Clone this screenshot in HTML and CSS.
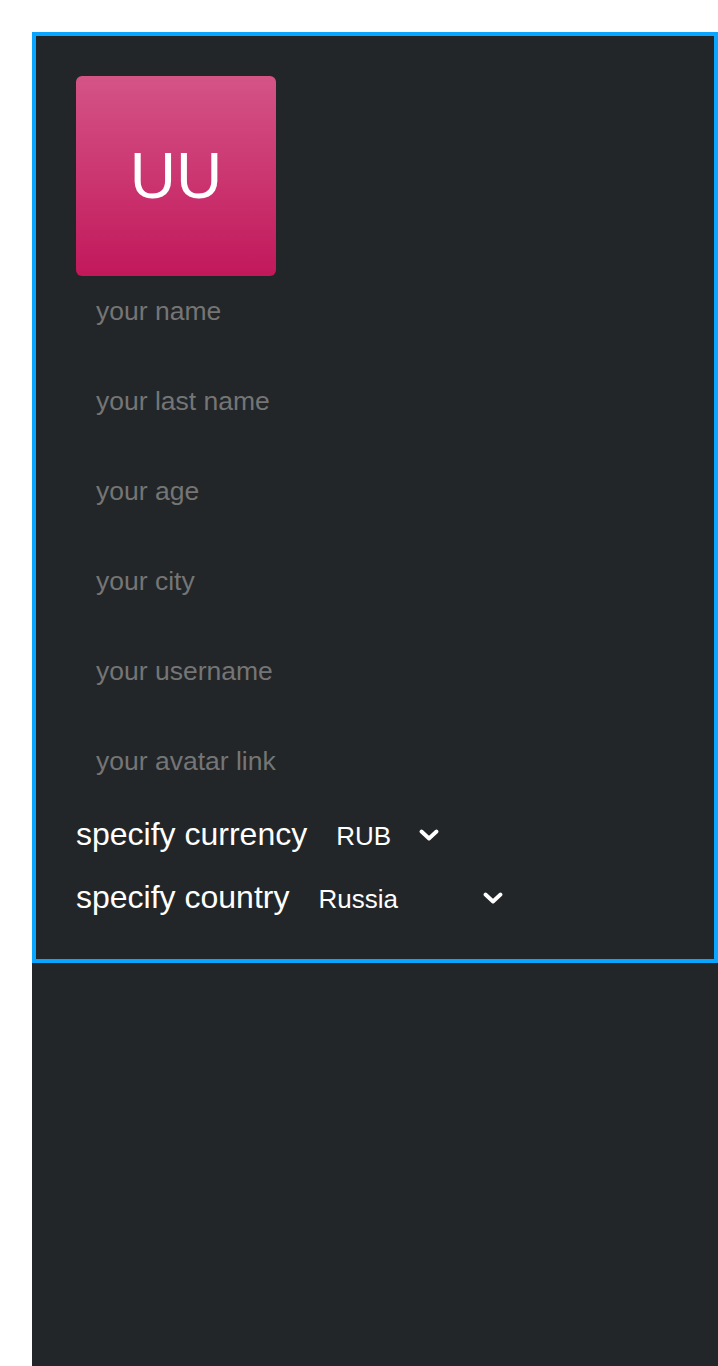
FILE: index.html
```html
<!DOCTYPE html>
<html lang="en">
<head>
<meta charset="utf-8">
<title>Profile</title>
<link rel="stylesheet" href="styles.css">
</head>
<body>
<main class="page">
  <form class="profile">
    <div class="avatar">UU</div>
    <input class="field" type="text" placeholder="your name">
    <input class="field" type="text" placeholder="your last name">
    <input class="field" type="text" placeholder="your age">
    <input class="field" type="text" placeholder="your city">
    <input class="field" type="text" placeholder="your username">
    <input class="field" type="text" placeholder="your avatar link">
    <div class="choices">
      <label class="choice">
        <span class="choice-label">specify currency</span>
        <span class="select-wrap">
          <select class="select select-currency">
            <option>RUB</option>
            <option>USD</option>
            <option>EUR</option>
          </select>
          <svg class="chevron" width="20" height="12" viewBox="0 0 20 12" aria-hidden="true"><path d="M2.5 2.5 L10 9.5 L17.5 2.5" fill="none" stroke="#fff" stroke-width="3.8" stroke-linecap="round" stroke-linejoin="round"/></svg>
        </span>
      </label>
      <label class="choice">
        <span class="choice-label">specify country</span>
        <span class="select-wrap">
          <select class="select select-country">
            <option>Russia</option>
            <option>Kazakhstan</option>
            <option>Belarus</option>
          </select>
          <svg class="chevron" width="20" height="12" viewBox="0 0 20 12" aria-hidden="true"><path d="M2.5 2.5 L10 9.5 L17.5 2.5" fill="none" stroke="#fff" stroke-width="3.8" stroke-linecap="round" stroke-linejoin="round"/></svg>
        </span>
      </label>
    </div>
  </form>
</main>
</body>
</html>
```

FILE: styles.css
```css
html, body {
  margin: 0;
  padding: 0;
  background: #ffffff;
}

body {
  padding: 32px 0 0 32px;
  font-family: "Liberation Sans", Arial, sans-serif;
}

.page {
  background: #222629;
  min-height: 1334px;
}

.profile {
  border: 4px solid #0aa5ff;
  padding: 40px 40px 40px;
  display: flex;
  flex-direction: column;
  align-items: flex-start;
}

.avatar {
  width: 200px;
  height: 200px;
  border-radius: 6px;
  background: linear-gradient(180deg, #d45486 0%, #c2185b 100%);
  color: #ffffff;
  font-size: 64px;
  display: flex;
  align-items: center;
  justify-content: center;
}

.field {
  box-sizing: border-box;
  width: 100%;
  height: 70px;
  margin: 0 0 20px;
  padding: 0 20px;
  border: none;
  outline: none;
  background: transparent;
  color: #ffffff;
  font-family: "Liberation Sans", Arial, sans-serif;
  font-size: 26.5px;
}

.field:last-of-type {
  margin-bottom: 0;
}

.field::placeholder {
  color: #757575;
}

.choices {
  margin-top: 16px;
  display: flex;
  flex-direction: column;
  gap: 19px;
}

.choice {
  display: flex;
  align-items: center;
  height: 44px;
}

.choice-label {
  color: #ffffff;
  font-size: 32px;
  margin-right: 13px;
}

.select-wrap {
  display: flex;
  align-items: center;
}

.select {
  appearance: none;
  -webkit-appearance: none;
  border: none;
  outline: none;
  background: transparent;
  color: #ffffff;
  font-family: "Liberation Sans", Arial, sans-serif;
  font-size: 26px;
  padding: 6px 16px;
  margin-top: 4px;
}

.select option {
  background: #222629;
  color: #ffffff;
}

.select-currency {
  width: 104px;
}

.select-country {
  width: 186px;
}

.chevron {
  flex: none;
  margin-left: -5px;
  margin-top: 2px;
}
```
